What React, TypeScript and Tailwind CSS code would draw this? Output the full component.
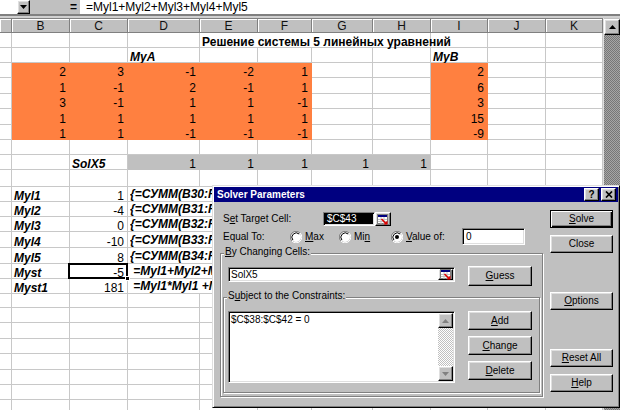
import React from 'react';

type C = {
  t?: string;
  s?: number;
  a?: 'l' | 'r';
  st?: 'b' | 'bi';
  f?: 'o' | 'g';
  sel?: boolean;
  clip?: boolean;
};

const E: C = {};
const GRID = 'grid grid-cols-[12px_58px_58px_72px_58px_54px_61px_58px_57px_58px_57px]';
const HEIGHTS = [15, 15, 15, 16, 15, 16, 15, 15, 15, 17, 15, 15, 15, 16, 16, 15, 15, 14, 15, 16, 15, 16, 15, 15, 15];
const HCLS: Record<number, string> = { 14: 'h-[14px]', 15: 'h-[15px]', 16: 'h-[16px]', 17: 'h-[17px]' };

const n = (t: string, f?: 'o' | 'g'): C => ({ t, a: 'r', f });
const lbl = (t: string): C => ({ t, a: 'l', st: 'bi' });
const fx = (t: string): C => ({ t, s: 2, a: 'l', st: 'bi', clip: true });
const empty = (): C[] => Array.from({ length: 11 }, () => ({}));

const MATRIX = [
  [2, 3, -1, -2, 1, 2],
  [1, -1, 2, -1, 1, 6],
  [3, -1, 1, 1, -1, 3],
  [1, 1, 1, 1, 1, 15],
  [1, 1, -1, -1, -1, -9],
];

const ROWS: C[][] = [
  [E, E, E, E, { t: 'Решение системы 5 линейных уравнений', s: 4, a: 'l', st: 'b' }, E, E, E],
  [E, E, E, lbl('MyA'), E, E, E, E, lbl('MyB'), E, E],
  ...MATRIX.map((r) => [E, ...r.slice(0, 5).map((v) => n(String(v), 'o')), E, E, n(String(r[5]), 'o'), E, E]),
  empty(),
  [E, E, lbl('SolX5'), n('1', 'g'), n('1', 'g'), n('1', 'g'), n('1', 'g'), n('1', 'g'), E, E, E],
  empty(),
  ...['Myl1', 'Myl2', 'Myl3', 'Myl4', 'Myl5'].map((l, i) => [
    E,
    lbl(l),
    n(['1', '-4', '0', '-10', '8'][i]),
    fx(`{=СУММ(B${30 + i}:F${30 + i}*SolX5)}`),
    E,
    E,
    E,
    E,
    E,
    E,
  ]),
  [E, lbl('Myst'), { t: '-5', a: 'r', sel: true }, fx(' =Myl1+Myl2+Myl3+Myl4+Myl5'), E, E, E, E, E, E],
  [E, lbl('Myst1'), n('181'), fx(' =Myl1*Myl1 +Myl2*Myl2'), E, E, E, E, E, E],
  empty(),
  empty(),
  empty(),
  empty(),
  empty(),
  empty(),
  empty(),
  empty(),
];

function Cell({ c }: { c: C }) {
  const span = c.s === 4 ? 'col-span-4' : c.s === 2 ? 'col-span-2' : '';
  const fill =
    c.f === 'o'
      ? 'bg-[#ff8040] border-[#ff8040]'
      : c.f === 'g'
      ? 'bg-[#c0c0c0] border-[#c0c0c0]'
      : 'border-[#c8c8c8]';
  const align = c.a === 'r' ? 'justify-end pr-[3px]' : 'justify-start pl-[2px]';
  const st = c.st === 'b' ? 'font-bold' : c.st === 'bi' ? 'font-bold italic' : '';
  return (
    <div className={`relative flex items-end border-r border-b ${fill} ${span} ${align}`}>
      {c.t && !c.clip && <span className={`whitespace-pre text-[12px] leading-[10px] ${st}`}>{c.t}</span>}
      {c.t && c.clip && (
        <div className="w-[82px] overflow-hidden">
          <span className={`block whitespace-pre text-[12px] leading-[13px] ${st}`}>{c.t}</span>
        </div>
      )}
      {c.sel && (
        <>
          <div className="absolute -left-[2px] -top-[1px] -right-[1px] -bottom-[1px] border-2 border-black" />
          <div className="absolute -right-[3px] -bottom-[3px] w-[5px] h-[5px] bg-black border border-white z-10" />
        </>
      )}
    </div>
  );
}

function HeaderRow() {
  const letters = ['', 'B', 'C', 'D', 'E', 'F', 'G', 'H', 'I', 'J', 'K'];
  return (
    <div className={`${GRID} h-[15px]`}>
      {letters.map((l, i) => (
        <div
          key={i}
          className="flex items-center justify-center bg-[#c0c0c0] border-t border-r border-b border-[#808080] shadow-[inset_1px_1px_0_#fff] text-[12px] leading-none text-[#111]"
        >
          {l}
        </div>
      ))}
    </div>
  );
}

function Sheet() {
  return (
    <div className="w-[603px] flex flex-col">
      <HeaderRow />
      {ROWS.map((r, i) => (
        <div key={i} className={`${GRID} ${HCLS[HEIGHTS[i]]}`}>
          {r.map((c, j) => (
            <Cell key={j} c={c} />
          ))}
        </div>
      ))}
    </div>
  );
}

const RAISED =
  'border border-t-white border-l-white border-r-black border-b-black shadow-[inset_-1px_-1px_0_#808080,inset_1px_1px_0_#dfdfdf]';
const DEF =
  'border border-black shadow-[inset_1px_1px_0_#fff,inset_-1px_-1px_0_#000,inset_-2px_-2px_0_#808080]';
const SUNK =
  'border border-t-[#808080] border-l-[#808080] border-r-white border-b-white shadow-[inset_1px_1px_0_#000,inset_-1px_-1px_0_#dfdfdf]';
const ETCH = 'border border-[#808080] shadow-[inset_1px_1px_0_#fff,1px_1px_0_#fff]';

function Tri({ up, color }: { up?: boolean; color: string }) {
  return (
    <svg width="7" height="4" viewBox="0 0 7 4">
      <path d={up ? 'M3.5 0L7 4H0Z' : 'M0 0H7L3.5 4Z'} fill={color} />
    </svg>
  );
}

function VScroll() {
  return (
    <div className="w-[17px] flex flex-col bg-[#c0c0c0] border-l border-[#dfdfdf]">
      <div className={`h-[16px] mt-[1px] bg-[#c0c0c0] ${RAISED} flex items-center justify-center`}>
        <Tri up color="#000" />
      </div>
      <div className="flex-1 bg-[image:repeating-conic-gradient(#777_0%_25%,#a6a6a6_0%_50%)] bg-[length:2px_2px]" />
    </div>
  );
}

function FormulaBar() {
  return (
    <div className="h-[14px] flex bg-[#c0c0c0]">
      <div className="w-[17px] bg-white" />
      <div className={`w-[13px] bg-[#c0c0c0] ${RAISED} flex items-center justify-center`}>
        <Tri color="#000" />
      </div>
      <div className="w-[50px] flex items-center justify-end pr-[3px] text-[12px] font-bold leading-none">=</div>
      <div className="flex-1 bg-white flex items-center pl-[6px] text-[12px] leading-none">=Myl1+Myl2+Myl3+Myl4+Myl5</div>
    </div>
  );
}

function U({ t, i }: { t: string; i: number }) {
  return (
    <>
      {t.slice(0, i)}
      <span className="underline underline-offset-[1px]">{t[i]}</span>
      {t.slice(i + 1)}
    </>
  );
}

function Btn({ t, i, cls, def }: { t: string; i?: number; cls: string; def?: boolean }) {
  return (
    <div className={`flex items-center justify-center bg-[#c0c0c0] text-[10px] leading-none ${def ? DEF : RAISED} ${cls}`}>
      {i === undefined ? t : <U t={t} i={i} />}
    </div>
  );
}

function RefIcon() {
  return (
    <svg width="12" height="11" viewBox="0 0 12 11">
      <rect x="0.5" y="0.5" width="10" height="9" fill="#fff" stroke="#808080" />
      <rect x="1" y="1" width="9" height="2" fill="#000080" />
      <path d="M1 5.5H10M1 7.5H10M4 3V10M7 3V10" stroke="#c0c0c0" strokeWidth="1" />
      <path d="M4.5 5L9.5 10" stroke="#e00000" strokeWidth="1.6" />
      <path d="M10.5 6.5V10.5H6.5Z" fill="#e00000" />
    </svg>
  );
}

function Radio({ on }: { on?: boolean }) {
  return (
    <svg width="12" height="12" viewBox="0 0 12 12" className="shrink-0">
      <circle cx="6" cy="6" r="5" fill="#fff" />
      <path d="M10.2 2.1A5.6 5.6 0 0 0 1.9 10.1" stroke="#808080" fill="none" />
      <path d="M1.9 10.1A5.6 5.6 0 0 0 10.2 2.1" stroke="#fff" fill="none" />
      <path d="M9.2 3A4.4 4.4 0 0 0 2.9 9.1" stroke="#000" fill="none" />
      {on && <circle cx="6" cy="6" r="2" fill="#000" />}
    </svg>
  );
}

function SolverDialog() {
  return (
    <div className="absolute left-[212px] top-[185px] w-[408px] h-[223px] bg-[#c0c0c0] border border-t-[#dfdfdf] border-l-[#dfdfdf] border-r-black border-b-black shadow-[inset_1px_1px_0_#fff,inset_-1px_-1px_0_#808080] flex flex-col text-[10px] text-black">
      <div className="mx-[1px] mt-[1px] h-[15px] bg-[#000080] flex items-center pl-[3px] pr-[2px]">
        <span className="text-white font-bold text-[10px] leading-none">Solver Parameters</span>
        <div className="ml-auto flex gap-[2px]">
          <div className={`w-[15px] h-[13px] bg-[#c0c0c0] ${RAISED} flex items-center justify-center text-[10px] font-bold leading-none`}>?</div>
          <div className={`w-[15px] h-[13px] bg-[#c0c0c0] ${RAISED} flex items-center justify-center`}>
            <svg width="8" height="7" viewBox="0 0 8 7">
              <path d="M1 0.5L7 6.5M7 0.5L1 6.5" stroke="#000" strokeWidth="1.7" />
            </svg>
          </div>
        </div>
      </div>

      <div className="flex">
        <div className="w-[332px] flex flex-col">
          <div className="mt-[10px] h-[14px] flex items-center pl-[10px]">
            <div className="w-[100px] leading-none">
              S<span className="underline underline-offset-[1px]">e</span>t Target Cell:
            </div>
            <div className={`w-[52px] h-[14px] bg-white ${SUNK} p-[1px]`}>
              <div className="w-full h-full bg-black text-white leading-[10px] pl-[2px]">$C$43</div>
            </div>
            <div className={`w-[16px] h-[14px] bg-[#c0c0c0] ${RAISED} flex items-center justify-center`}>
              <RefIcon />
            </div>
          </div>

          <div className="mt-[2px] h-[17px] flex items-center pl-[10px]">
            <div className="w-[67px] leading-none">Equal To:</div>
            <div className="w-[49px] flex items-center gap-[3px]">
              <Radio />
              <span className="leading-none">
                <U t="Max" i={0} />
              </span>
            </div>
            <div className="w-[52px] flex items-center gap-[3px]">
              <Radio />
              <span className="leading-none">
                <U t="Min" i={2} />
              </span>
            </div>
            <div className="w-[71px] flex items-center gap-[3px]">
              <Radio on />
              <span className="leading-none">
                <U t="Value of:" i={0} />
              </span>
            </div>
            <div className={`w-[63px] h-[17px] bg-white ${SUNK} flex items-center pl-[3px] leading-none`}>0</div>
          </div>

          <div className={`relative mt-[8px] ml-[7px] w-[323px] h-[144px] ${ETCH} flex flex-col`}>
            <span className="absolute left-[3px] -top-[7px] bg-[#c0c0c0] px-[1px] leading-none">
              <U t="By Changing Cells:" i={0} />
            </span>
            <div className="mt-[12px] flex items-start">
              <div className={`ml-[7px] mt-[1px] w-[227px] h-[15px] bg-white ${SUNK} flex items-center`}>
                <span className="pl-[2px] leading-none">SolX5</span>
                <div className={`ml-auto mr-[1px] w-[15px] h-[11px] bg-[#c0c0c0] ${RAISED} flex items-center justify-center`}>
                  <RefIcon />
                </div>
              </div>
              <Btn t="Guess" i={0} cls="ml-[13px] w-[64px] h-[20px]" />
            </div>

            <div className={`relative mt-[11px] ml-[2px] w-[317px] h-[96px] ${ETCH} flex items-start`}>
              <span className="absolute left-[3px] -top-[7px] bg-[#c0c0c0] px-[1px] leading-none">
                <U t="Subject to the Constraints:" i={1} />
              </span>
              <div className={`ml-[4px] mt-[13px] w-[227px] h-[72px] bg-white ${SUNK} flex`}>
                <div className="flex-1 pl-[2px] pt-[3px] leading-none">$C$38:$C$42 = 0</div>
                <div className="w-[15px] my-[1px] mr-[1px] flex flex-col bg-[image:repeating-conic-gradient(#c0c0c0_0%_25%,#fff_0%_50%)] bg-[length:2px_2px]">
                  <div className={`h-[15px] bg-[#c0c0c0] ${RAISED} flex items-center justify-center`}>
                    <Tri up color="#808080" />
                  </div>
                  <div className="flex-1" />
                  <div className={`h-[15px] bg-[#c0c0c0] ${RAISED} flex items-center justify-center`}>
                    <Tri color="#808080" />
                  </div>
                </div>
              </div>
              <div className="ml-[13px] mt-[13px] flex flex-col gap-[6px]">
                <Btn t="Add" i={0} cls="w-[64px] h-[19px]" />
                <Btn t="Change" i={0} cls="w-[64px] h-[19px]" />
                <Btn t="Delete" i={0} cls="w-[64px] h-[19px]" />
              </div>
            </div>
          </div>
        </div>

        <div className="ml-[5px] w-[63px] flex flex-col">
          <Btn t="Solve" i={0} def cls="mt-[8px] h-[18px]" />
          <Btn t="Close" cls="mt-[7px] h-[18px]" />
          <Btn t="Options" i={0} cls="mt-[39px] h-[18px]" />
          <Btn t="Reset All" i={0} cls="mt-[39px] h-[18px]" />
          <Btn t="Help" i={0} cls="mt-[7px] h-[18px]" />
        </div>
      </div>
    </div>
  );
}

export default function App() {
  return (
    <div className="relative w-[620px] h-[410px] overflow-hidden bg-white font-['Liberation_Sans',Arial,sans-serif] text-black">
      <FormulaBar />
      <div className="h-[4px] bg-[#d0d0d0] border-t-2 border-[#808080]" />
      <div className="flex">
        <Sheet />
        <VScroll />
      </div>
      <SolverDialog />
    </div>
  );
}
